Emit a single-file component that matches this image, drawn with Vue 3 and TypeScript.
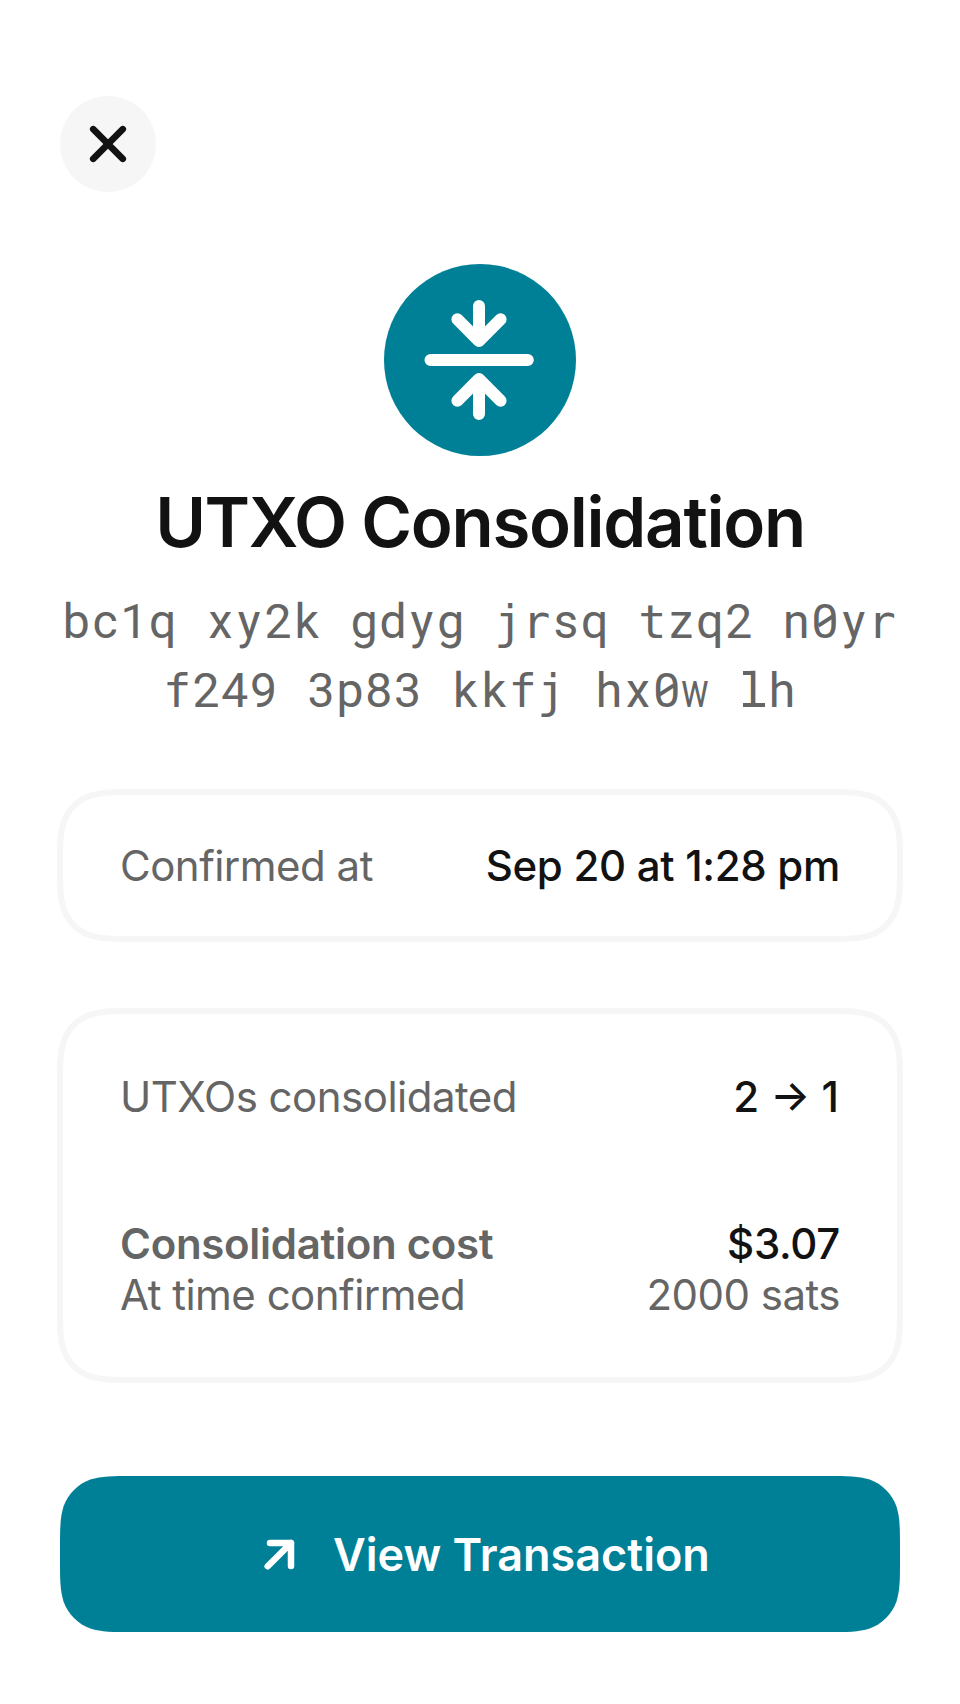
<script setup lang="ts">
interface Cell {
  value: string
  kind: string
}

const addressLines: string[] = ['bc1q xy2k gdyg jrsq tzq2 n0yr', 'f249 3p83 kkfj hx0w lh']

const kinds: Record<string, string> = {
  '0': 'zero',
  f: 'slab-f',
  j: 'slab-j',
  l: 'slab-l',
  r: 'wide-r',
  t: 'wide-t',
  w: 'narrow-w',
}

const cells: Cell[][] = addressLines.map((line) =>
  [...line].map((value) => ({ value: value === ' ' ? '\u00a0' : value, kind: kinds[value] ?? 'plain' })),
)

// Rounded rectangle with continuous-curvature corners.
function smoothRect(x: number, y: number, w: number, h: number, r: number): string {
  const a = 1.52866498 * r
  const b = 1.08849296 * r
  const c = 0.86840694 * r
  const d = 0.63149379 * r
  const e = 0.07491139 * r
  const f = 0.37282383 * r
  const g = 0.16905956 * r
  const R = x + w
  const B = y + h
  return [
    `M${x + a} ${y}H${R - a}`,
    `C${R - b} ${y} ${R - c} ${y} ${R - d} ${y + e}`,
    `C${R - f} ${y + g} ${R - g} ${y + f} ${R - e} ${y + d}`,
    `C${R} ${y + c} ${R} ${y + b} ${R} ${y + a}`,
    `V${B - a}`,
    `C${R} ${B - b} ${R} ${B - c} ${R - e} ${B - d}`,
    `C${R - g} ${B - f} ${R - f} ${B - g} ${R - d} ${B - e}`,
    `C${R - c} ${B} ${R - b} ${B} ${R - a} ${B}`,
    `H${x + a}`,
    `C${x + b} ${B} ${x + c} ${B} ${x + d} ${B - e}`,
    `C${x + f} ${B - g} ${x + g} ${B - f} ${x + e} ${B - d}`,
    `C${x} ${B - c} ${x} ${B - b} ${x} ${B - a}`,
    `V${y + a}`,
    `C${x} ${y + b} ${x} ${y + c} ${x + e} ${y + d}`,
    `C${x + g} ${y + f} ${x + f} ${y + g} ${x + d} ${y + e}`,
    `C${x + c} ${y} ${x + b} ${y} ${x + a} ${y}Z`,
  ].join('')
}

const timeOutline = smoothRect(3, 3, 840, 147, 48)
const costOutline = smoothRect(3, 3, 840, 369, 48)
const buttonShape = smoothRect(0, 0, 840, 156, 48)
</script>

<template>
  <main class="screen">
    <button class="close" aria-label="Close">
      <svg width="96" height="96" viewBox="0 0 96 96">
        <path d="M33.2 33.2L62.8 62.8M62.8 33.2L33.2 62.8" fill="none" stroke="#121212" stroke-width="6.6" stroke-linecap="round" />
      </svg>
    </button>

    <header class="hero">
      <svg class="badge" width="192" height="192" viewBox="0 0 192 192">
        <circle cx="96" cy="96" r="96" fill="#008097" />
        <path
          d="M46.5 96H143.8M95 42V77M73.4 55.3L95 77L116.6 55.3M95 150V115M73.4 136.7L95 115L116.6 136.7"
          fill="none"
          stroke="#fff"
          stroke-width="12"
          stroke-linecap="round"
          stroke-linejoin="round"
        />
      </svg>
      <h1 class="title">UTXO Consolidation</h1>
      <div class="address">
        <div v-for="(line, i) in cells" :key="i" class="address-line">
          <span v-for="(cell, j) in line" :key="j" class="cell" :class="cell.kind"><span class="glyph">{{ cell.value }}</span></span>
        </div>
      </div>
    </header>

    <section class="card card-time">
      <svg class="outline" width="846" height="153"><path :d="timeOutline" /></svg>
      <div class="row">
        <span class="label">Confirmed at</span>
        <span class="value">Sep 20 at 1:28 pm</span>
      </div>
    </section>

    <section class="card card-cost">
      <svg class="outline" width="846" height="375"><path :d="costOutline" /></svg>
      <div class="row">
        <span class="label">UTXOs consolidated</span>
        <span class="value count">2 → 1</span>
      </div>
      <div class="group">
        <div class="row">
          <span class="label strong">Consolidation cost</span>
          <span class="value">$3.07</span>
        </div>
        <div class="row">
          <span class="label">At time confirmed</span>
          <span class="label">2000 sats</span>
        </div>
      </div>
    </section>

    <button class="action">
      <svg class="action-bg" width="840" height="156"><path :d="buttonShape" fill="#008097" /></svg>
      <svg class="action-icon" width="33" height="33" viewBox="0 1.5 33 33">
        <path
          d="M6 6.5H27V29.5M27 6.5L3.7 29.7"
          fill="none"
          stroke="#fff"
          stroke-width="6.5"
          stroke-linecap="round"
          stroke-linejoin="round"
        />
      </svg>
      <span class="action-text">View Transaction</span>
    </button>
  </main>
</template>

<style>
body {
  background: #fff;
}
</style>

<style scoped>
.screen {
  box-sizing: border-box;
  width: 960px;
  height: 1704px;
  padding: 96px 60px 72px;
  display: flex;
  flex-direction: column;
  overflow: hidden;
  background: #fff;
  color: #121212;
  font-family: Inter, 'Liberation Sans', sans-serif;
}

button {
  border: 0;
  padding: 0;
  background: none;
  font-family: inherit;
}

svg {
  display: block;
}

.close {
  width: 96px;
  height: 96px;
  border-radius: 50%;
  background: #f6f6f6;
}

.hero {
  display: flex;
  flex-direction: column;
  align-items: center;
  margin-top: 72px;
  height: 528px;
}

.title {
  margin: 24px 0 0;
  font-size: 69px;
  line-height: 84px;
  font-weight: 600;
  letter-spacing: -1.3px;
  word-spacing: -0.5px;
  white-space: nowrap;
}

.address {
  margin-top: 23px;
  padding-right: 1px;
  color: #656565;
  font-family: Roboto, 'Liberation Sans', sans-serif;
  font-size: 48px;
  line-height: 69px;
}

.address-line {
  display: flex;
  justify-content: center;
  align-items: baseline;
  height: 69px;
}

.cell {
  display: flex;
  justify-content: center;
  width: 28.8px;
  height: 69px;
  position: relative;
}

.glyph {
  display: block;
}

.slab-f .glyph,
.slab-j .glyph,
.wide-r .glyph,
.wide-t .glyph {
  font-family: 'DejaVu Sans Mono', monospace;
  font-size: 47px;
}

.wide-r .glyph {
  transform: translateX(-1px);
}

.slab-l::before,
.slab-l::after {
  content: '';
  position: absolute;
  height: 4px;
  background: #656565;
}

.slab-l::before {
  left: 4px;
  top: 15px;
  width: 11px;
}

.slab-l::after {
  left: 4px;
  top: 47px;
  width: 22px;
}

.narrow-w .glyph {
  transform: scaleX(0.76);
}

.zero::after {
  content: '';
  position: absolute;
  left: 6px;
  top: 32px;
  width: 17px;
  height: 3.6px;
  background: #656565;
  transform: rotate(-33deg);
}

.card {
  position: relative;
  box-sizing: border-box;
  padding: 0 60px;
  flex: none;
}

.card-time {
  height: 147px;
  padding-top: 48px;
}

.card-cost {
  height: 369px;
  margin-top: 72px;
  padding-top: 60px;
}

.outline {
  position: absolute;
  left: -3px;
  top: -3px;
  fill: none;
  stroke: #f6f6f6;
  stroke-width: 6;
}

.row {
  display: flex;
  justify-content: space-between;
  height: 51px;
  font-size: 42px;
  line-height: 51px;
  white-space: nowrap;
}

.label {
  color: #656565;
  letter-spacing: -0.51px;
}

.value {
  font-weight: 500;
  letter-spacing: -0.3px;
}

.count {
  padding-right: 1px;
  letter-spacing: 0;
}

.strong {
  font-weight: 600;
  letter-spacing: -0.3px;
}

.group {
  margin-top: 96px;
}

.action {
  position: relative;
  display: flex;
  align-items: center;
  flex: none;
  width: 840px;
  height: 156px;
  margin-top: 96px;
}

.action-bg {
  position: absolute;
  inset: 0;
}

.action-icon {
  position: relative;
  margin-left: 204px;
}

.action-text {
  position: relative;
  margin-left: 36px;
  padding-top: 2px;
  color: #fff;
  font-size: 45px;
  line-height: 54px;
  font-weight: 600;
  white-space: nowrap;
}
</style>
